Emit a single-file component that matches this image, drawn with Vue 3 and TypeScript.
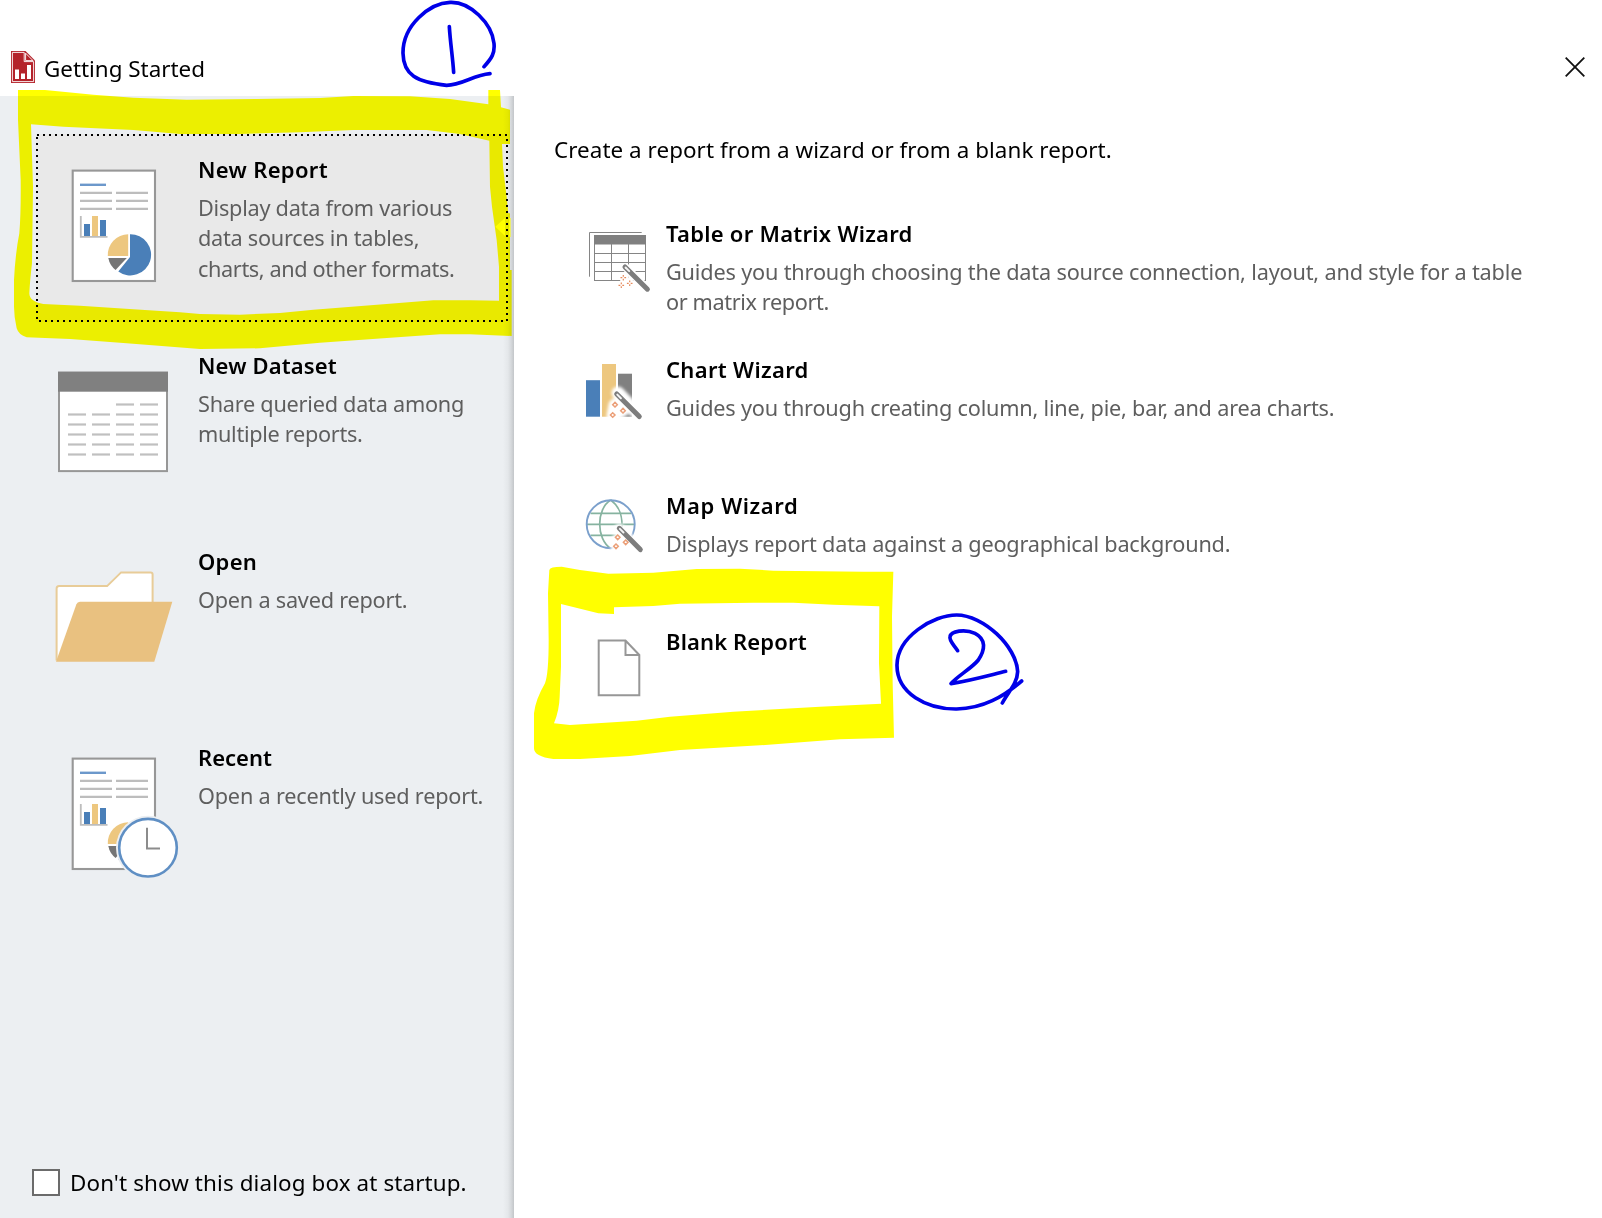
<script setup lang="ts">
type SideIcon = 'report' | 'dataset' | 'folder' | 'recent'
type WizardIcon = 'table' | 'chart' | 'map' | 'blank'

interface Line {
  text: string
  spacing: number
}

interface Entry<T> {
  icon: T
  title: Line
  lines: Line[]
}

const sideItems: Entry<SideIcon>[] = [
  {
    icon: 'report',
    title: { text: 'New Report', spacing: 0.33 },
    lines: [
      { text: 'Display data from various', spacing: -0.25 },
      { text: 'data sources in tables,', spacing: -0.26 },
      { text: 'charts, and other formats.', spacing: -0.38 },
    ],
  },
  {
    icon: 'dataset',
    title: { text: 'New Dataset', spacing: 0.14 },
    lines: [
      { text: 'Share queried data among', spacing: -0.25 },
      { text: 'multiple reports.', spacing: -0.3 },
    ],
  },
  {
    icon: 'folder',
    title: { text: 'Open', spacing: 0.3 },
    lines: [{ text: 'Open a saved report.', spacing: -0.23 }],
  },
  {
    icon: 'recent',
    title: { text: 'Recent', spacing: 0 },
    lines: [{ text: 'Open a recently used report.', spacing: -0.21 }],
  },
]

const wizards: Entry<WizardIcon>[] = [
  {
    icon: 'table',
    title: { text: 'Table or Matrix Wizard', spacing: 0.27 },
    lines: [
      { text: 'Guides you through choosing the data source connection, layout, and style for a table', spacing: -0.175 },
      { text: 'or matrix report.', spacing: -0.38 },
    ],
  },
  {
    icon: 'chart',
    title: { text: 'Chart Wizard', spacing: 0.33 },
    lines: [{ text: 'Guides you through creating column, line, pie, bar, and area charts.', spacing: -0.21 }],
  },
  {
    icon: 'map',
    title: { text: 'Map Wizard', spacing: 0.6 },
    lines: [{ text: 'Displays report data against a geographical background.', spacing: -0.22 }],
  },
  { icon: 'blank', title: { text: 'Blank Report', spacing: 0.13 }, lines: [] },
]

const wands: Record<string, { line: number[]; sparks: number[][] }> = {
  table: { line: [45, 41.9, 67.4, 64.2], sparks: [[43.3, 52.7], [41.3, 60.3], [49.7, 58.3]] },
  chart: { line: [36.7, 33, 59.3, 55.6], sparks: [[35, 43.7], [32.7, 54], [43, 49.7]] },
  map: { line: [39.3, 31.3, 60.3, 52.6], sparks: [[37.7, 40.3], [36, 49.3], [45.7, 45.3]] },
}

const rows = [48.5, 58.5, 68.5, 78.5, 88.5, 98.5]
const cols = [20, 44, 68, 92]
</script>

<template>
  <div class="dialog">
    <header class="titlebar">
      <svg class="app-icon" width="24" height="32" viewBox="0 0 24 32">
        <path d="M0 0H14.5L24 9.5V32H0Z" fill="#b4232b" />
        <path d="M1.4 1.4H13.2V10.6H22.6V30.6H1.4Z" fill="none" stroke="#fff" stroke-width="0.9" />
        <path d="M14.6 2.2L22 9.6H14.6Z" fill="#b4232b" stroke="#fff" stroke-width="0.9" />
        <path d="M4 18.5H8V28H4ZM10 22.5H14V28H10ZM16 14H20V28H16Z" fill="#fff" />
      </svg>
      <span class="caption">Getting Started</span>
      <svg class="close" width="20" height="20" viewBox="0 0 20 20">
        <path d="M0.7 0.7L19.3 19.3M19.3 0.7L0.7 19.3" stroke="#111" stroke-width="1.8" />
      </svg>
    </header>

    <div class="body">
      <aside class="sidebar">
        <nav class="side-list">
          <div v-for="(item, i) in sideItems" :key="item.icon" class="side-item" :class="{ selected: i === 0 }">
            <svg v-if="i === 0" class="focus" width="472" height="188" viewBox="0 0 472 188">
              <rect x="1" y="1" width="470" height="186" fill="none" stroke="#000" stroke-width="2" stroke-dasharray="2 4" />
            </svg>
            <svg class="side-icon" width="136" height="132" viewBox="0 0 136 132">
              <g v-if="item.icon === 'report' || item.icon === 'recent'">
                <rect x="24.7" y="10.6" width="82.3" height="110.4" fill="#fff" stroke="#979797" stroke-width="2.1" />
                <path d="M32 24.8H58" stroke="#6c98cb" stroke-width="2.4" />
                <path d="M32 32.8H64M68 32.8H100M32 40.8H64M68 40.8H100M32 48.8H64M68 48.8H100" stroke="#bdbdbd" stroke-width="2.2" />
                <path d="M32.8 56V76.8H59.5" fill="none" stroke="#bdbdbd" stroke-width="1.8" />
                <path d="M36 64H42V76H36ZM52 60H58V76H52Z" fill="#4a7fb8" />
                <path d="M44 56H50V76H44Z" fill="#edc77f" />
                <path d="M82 74.2A20.6 20.6 0 1 1 70.3 111.4L82 97Z" fill="#4a7fb8" />
                <path d="M80.2 74.3V96H59.8A20.6 20.6 0 0 1 80.2 74.3Z" fill="#edc77f" />
                <path d="M60.3 98H78.8L67.6 110A20 20 0 0 1 60.3 98Z" fill="#757575" />
                <g v-if="item.icon === 'recent'">
                  <circle cx="100" cy="99.7" r="32" fill="#eceff2" />
                  <circle cx="100" cy="99.7" r="28.8" fill="#fff" stroke="#5f8fc4" stroke-width="2.6" />
                  <path d="M99 79.7V100.6H112" fill="none" stroke="#8c8c8c" stroke-width="2" />
                </g>
              </g>
              <g v-else-if="item.icon === 'dataset'">
                <rect x="11" y="16.7" width="108" height="98.4" fill="#fff" stroke="#979797" stroke-width="2" />
                <rect x="10" y="15.7" width="110" height="20" fill="#808080" />
                <template v-for="(y, r) in rows" :key="y">
                  <template v-for="(x, c) in cols" :key="x">
                    <rect v-if="r > 0 || c > 1" :x="x" :y="y - 1.1" width="18" height="2.2" fill="#c0c0c0" />
                  </template>
                </template>
              </g>
              <g v-else>
                <path d="M9 109V37Q9 34.5 11.5 34.5H59.5L73.5 20.8H103Q105 20.8 105 22.8V52" transform="translate(-0.4 -0.4)" fill="#fff" stroke="#e8cc98" stroke-width="2" />
                <path d="M8 109.7L28.3 52.5Q29.3 49.7 32 49.7H124.3L106.3 109.7Z" fill="#e9c180" />
              </g>
            </svg>
            <div class="copy">
              <div class="title"><span :style="{ letterSpacing: item.title.spacing + 'px' }">{{ item.title.text }}</span></div>
              <div v-for="l in item.lines" :key="l.text" class="desc"><span :style="{ letterSpacing: l.spacing + 'px' }">{{ l.text }}</span></div>
            </div>
          </div>
        </nav>
        <label class="startup">
          <span class="box"></span>
          <span class="startup-text">Don't show this dialog box at startup.</span>
        </label>
      </aside>

      <main class="content">
        <p class="intro"><span>Create a report from a wizard or from a blank report.</span></p>
        <div v-for="w in wizards" :key="w.icon" class="wizard">
          <svg class="wizard-icon" width="72" height="72" viewBox="0 0 72 72">
            <defs>
              <filter id="soft" x="-50%" y="-50%" width="200%" height="200%"><feGaussianBlur stdDeviation="1.6" /></filter>
            </defs>
            <g v-if="w.icon === 'table'" fill="none" stroke="#858585">
              <path d="M9.5 51.7V7.5H61.7" stroke-width="1" />
              <rect x="14.5" y="10.5" width="51" height="45" stroke-width="1" />
              <rect x="14" y="10" width="52" height="9.5" fill="#808080" stroke="none" />
              <path d="M31.5 19V55M48.5 19V55M14 28.5H66M14 37.5H66M14 46.5H66" stroke-width="1" />
              <path d="M45 41.7L67 63.7M45 50L44 60" stroke="#fff" stroke-width="8" />
              <path d="M41 54L52 58" stroke="#fff" stroke-width="7" />
            </g>
            <g v-else-if="w.icon === 'chart'">
              <rect x="6" y="19.2" width="14" height="36.5" fill="#4a7fb8" />
              <rect x="22" y="3" width="14" height="52.7" fill="#edc77f" />
              <rect x="38" y="12.7" width="14" height="43" fill="#808080" />
              <path d="M38 32L60 55M35 44L33 55L43 49" fill="none" stroke="#fff" stroke-width="13" stroke-linecap="round" stroke-linejoin="round" filter="url(#soft)" />
            </g>
            <g v-else-if="w.icon === 'map'" fill="none">
              <path d="M30.7 3C16 12 16 42 30.7 51.5M30.7 3C39 9 42.5 17 42 31M10.5 16.3H51M6.5 27.3H54.5M10.5 38.3H44" stroke="#86b3a0" stroke-width="1.7" />
              <circle cx="30.7" cy="27.3" r="24" stroke="#7ba0cc" stroke-width="1.9" />
              <path d="M39.5 31.5L61 53M37.5 41L36 51L46 46" stroke="#fff" stroke-width="10" stroke-linecap="round" filter="url(#soft)" />
            </g>
            <path v-else d="M18.7 7.5H45.5L59.3 22V62.3H18.7ZM45.5 7.5V22H59.3" fill="none" stroke="#979797" stroke-width="2" />
            <g v-if="wands[w.icon]">
              <line :x1="wands[w.icon].line[0]" :y1="wands[w.icon].line[1]" :x2="wands[w.icon].line[2]" :y2="wands[w.icon].line[3]" stroke="#7d7d7d" stroke-width="5" stroke-linecap="round" />
              <line :x1="wands[w.icon].line[0] + 0.6" :y1="wands[w.icon].line[1] + 0.6" :x2="wands[w.icon].line[0] + 4.2" :y2="wands[w.icon].line[1] + 4.2" stroke="#f4f4f4" stroke-width="2" stroke-linecap="round" />
              <g v-for="(s, i) in wands[w.icon].sparks" :key="i">
                <path v-if="w.icon === 'table'" :transform="`translate(${s[0]} ${s[1]})`" d="M0 -2.8V-1M0 1V2.8M-2.8 0H-1M1 0H2.8" stroke="#e58a5c" stroke-width="1.2" />
                <path v-else :transform="`translate(${s[0]} ${s[1]})`" d="M0 -2.3L2.3 0L0 2.3L-2.3 0Z" fill="#fff" stroke="#eb9f78" stroke-width="1.5" />
              </g>
            </g>
          </svg>
          <div class="copy">
            <div class="title"><span :style="{ letterSpacing: w.title.spacing + 'px' }">{{ w.title.text }}</span></div>
            <div v-for="l in w.lines" :key="l.text" class="desc"><span :style="{ letterSpacing: l.spacing + 'px' }">{{ l.text }}</span></div>
          </div>
        </div>
      </main>
    </div>

    <!-- Highlighter marks -->
    <svg class="overlay marker" width="1602" height="1218" viewBox="0 0 1602 1218">
      <g fill="#ff0" fill-rule="evenodd">
        <path
          transform="scale(0.33333)"
          d="M54 270L135 270L280 284L400 293L560 299L770 297L960 294L1060 288L1230 289L1350 297L1465 313V270H1500L1503 322L1530 329V432H1506L1509 500L1520 590L1525 640H1530V810H1535V1008L1410 1003H1320L1150 1015L960 1028L780 1045L600 1047L380 1030L210 1017L80 1012Q56 1005 50 985Q42 950 42 920V840Q46 760 58 700Q63 640 62 540L54 360Z
             M93 373L190 380L400 390L540 402H720L900 397L1060 390H1280L1380 402L1468 422L1470 560L1476 620L1490 720L1497 800V902L1410 901H1300L1150 913L940 929L840 939L720 944L600 942L540 937L400 928L240 917L130 912Q88 905 88 880Q90 840 96 790L99 560Z"
        />
        <path
          transform="translate(520 550) scale(0.33333)"
          d="M88 60Q90 50 125 50L180 60L265 71L400 68L530 57L660 56L760 62L900 64L1030 65H1120L1116 200L1118 400L1122 563L960 568L720 586L480 600L330 618L180 627H100Q42 620 42 595V490Q46 450 75 400Q86 370 86 270L84 130Z
             M123 162L235 190L282 192V172L400 168L480 161L700 158H820L940 164L1078 169L1077 340L1083 461L900 470L640 485L450 500L350 512L150 525L102 520Q118 480 119 440L123 350Z"
        />
      </g>
    </svg>

    <!-- Pen marks -->
    <svg class="overlay" width="1602" height="1218" viewBox="0 0 1602 1218">
      <path d="M495.3 226.7L505 218V236Z" fill="#ff0" />
      <path d="M509 218H510.5V237H509Z" fill="#ff0" />
      <g fill="none" stroke="#0000e8" stroke-width="11" stroke-linecap="round" stroke-linejoin="round">
        <g transform="scale(0.33333)">
          <path d="M1452 200C1475 175 1485 160 1482 130C1476 70 1410 4 1350 7C1290 9 1208 75 1209 160C1210 225 1250 247 1340 256C1385 256 1420 225 1470 221" />
          <path d="M1348 80C1351 130 1358 170 1361 217" />
        </g>
        <g transform="translate(520 550) scale(0.33333)">
          <path d="M1505 393C1450 440 1390 475 1310 477C1220 478 1130 430 1131 345C1132 260 1240 195 1310 195C1390 195 1490 290 1493 365C1492 400 1465 425 1447 459" />
          <path d="M1313 302C1300 283 1287 272 1290 260C1293 243 1335 236 1365 250C1400 268 1395 300 1375 330C1355 355 1310 380 1293 401C1350 392 1400 378 1457 364" />
        </g>
      </g>
    </svg>
  </div>
</template>

<style>
body {
  background: #fff;
}
</style>

<style scoped>
.dialog {
  position: relative;
  display: flex;
  flex-direction: column;
  width: 1602px;
  height: 1218px;
  overflow: hidden;
  background: #fff;
  color: #000;
  font: 22.4px/30.5px 'Noto Sans', 'Open Sans', sans-serif;
  white-space: nowrap;
}
.titlebar {
  display: flex;
  flex: none;
  box-sizing: border-box;
  height: 96px;
  padding: 51px 17px 0 10.5px;
}
.app-icon {
  flex: none;
}
.caption {
  margin: 3px auto 0 9.5px;
}
.close {
  margin-top: 6px;
}
.body {
  display: flex;
  flex: 1;
}
.sidebar {
  display: flex;
  flex-direction: column;
  justify-content: space-between;
  box-sizing: border-box;
  width: 514px;
  padding: 38px 6px 20px 36px;
  background: linear-gradient(to left, #c3c6c9 0, #d6d9dc 3px, #e4e7ea 6px, #eceff2 11px);
}
.side-list {
  display: flex;
  flex-direction: column;
  gap: 8px;
}
.side-item {
  position: relative;
  display: flex;
  height: 188px;
}
.selected {
  background: #e9e9e9;
}
.focus {
  position: absolute;
  inset: 0;
}
.side-icon {
  flex: none;
  margin: 26px 14px 0 12px;
}
.side-item .copy {
  padding-top: 19.5px;
}
.title {
  margin-bottom: 8.6px;
  font-size: 22px;
  font-weight: 600;
}
.desc {
  color: #5e5e5e;
  font-size: 21.7px;
}
.startup {
  display: flex;
  align-items: center;
  margin-left: -4px;
}
.startup-text {
  letter-spacing: 0.12px;
}
.box {
  box-sizing: border-box;
  width: 28px;
  height: 27px;
  margin-right: 10px;
  border: 2px solid #6b6b6b;
  background: #fff;
}
.content {
  padding: 39px 0 0 40px;
}
.intro {
  margin: 0 0 59px;
  letter-spacing: 0.06px;
}
.wizard {
  display: flex;
  height: 136px;
  padding-left: 26px;
}
.wizard-icon {
  flex: none;
  margin: 0 14px 0 0;
}
.wizard .copy {
  margin-top: -7px;
}
.overlay {
  position: absolute;
  top: 0;
  left: 0;
  pointer-events: none;
}
.marker {
  mix-blend-mode: multiply;
}
</style>
